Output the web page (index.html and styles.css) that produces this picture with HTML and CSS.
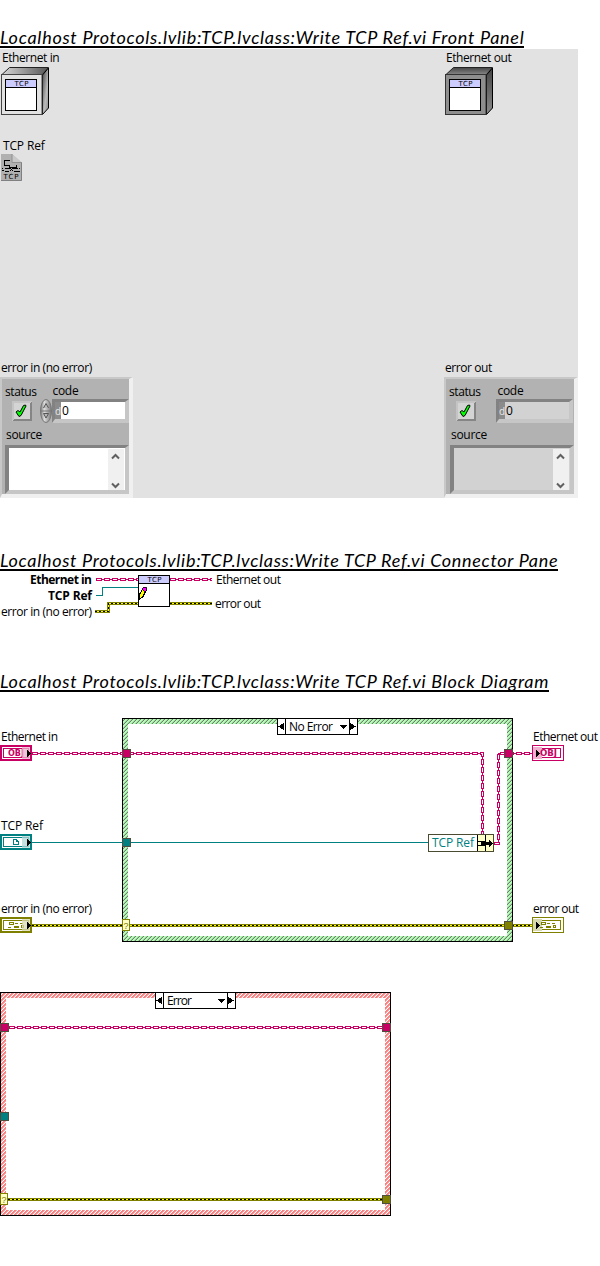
FILE: index.html
```html
<!DOCTYPE html>
<html lang="en">
<head>
<meta charset="utf-8">
<title>Write TCP Ref.vi</title>
<link rel="stylesheet" href="styles.css">
</head>
<body>
<svg class="defs" width="0" height="0" aria-hidden="true">
  <defs>
    <pattern id="hatch-green" width="4" height="4" patternUnits="userSpaceOnUse">
      <rect width="4" height="4" fill="#b3ffb3"/>
      <path d="M3 0h1v1h-1zM2 1h1v1h-1zM1 2h1v1h-1zM0 3h1v1h-1z" fill="#6f7f6f"/>
      <path d="M2 0h1v1h-1zM1 1h1v1h-1zM0 2h1v1h-1zM3 3h1v1h-1z" fill="#a6d2a6"/>
    </pattern>
    <pattern id="hatch-red" width="4" height="4" patternUnits="userSpaceOnUse">
      <rect width="4" height="4" fill="#ff8080"/>
      <path d="M3 0h1v1h-1zM2 1h1v1h-1zM1 2h1v1h-1zM0 3h1v1h-1z" fill="#fff"/>
      <path d="M2 0h1v1h-1zM1 1h1v1h-1zM0 2h1v1h-1zM3 3h1v1h-1z" fill="#eab0b0"/>
    </pattern>
    <linearGradient id="cube-top"><stop offset="0" stop-color="#d8d8d8"/><stop offset="1" stop-color="#555"/></linearGradient>
    <linearGradient id="cube-side" x2="1" y2="1"><stop offset="0" stop-color="#444"/><stop offset=".6" stop-color="#bbb"/><stop offset="1" stop-color="#888"/></linearGradient>
    <linearGradient id="cube-dark" x2="0" y2="1"><stop offset="0" stop-color="#444"/><stop offset="1" stop-color="#8c8c8c"/></linearGradient>
    <linearGradient id="knob"><stop offset="0" stop-color="#777"/><stop offset=".35" stop-color="#ddd"/><stop offset="1" stop-color="#777"/></linearGradient>
    <g id="vi-icon">
      <rect x=".5" y=".5" width="31" height="31" fill="#fff" stroke="#000"/>
      <rect x="1" y="1" width="30" height="7" fill="#ccccff"/>
      <path d="M1 8.500h30" stroke="#000"/>
      <text class="pixel" x="9.500" y="7" textLength="14">TCP</text>
    </g>
    <g id="check" shape-rendering="crispEdges">
      <rect width="20" height="20" fill="#c8c8c8"/>
      <path d="M0 20V0h20l-2 2H2v16z" fill="#c4c4c4"/>
      <path d="M20 0v20H0l2-2h16V2z" fill="#858585"/>
      <rect x="2" y="2" width="16" height="16" fill="#d4d4d4"/>
      <path shape-rendering="auto" d="M4 11l2-1.500 2 1.500 3.500-6.500 2-.5.500 1-5 9.500-2 1z" fill="#0f0" stroke="#000"/>
    </g>
    <g id="scroll">
      <rect width="16" height="41" fill="#f0f0f0"/>
      <path d="M4 9.500L7.500 6 11 9.500M4 34.500L7.500 38l3.500-3.500" fill="none" stroke="#606060" stroke-width="2"/>
    </g>
  </defs>
</svg>

<main>
<section class="front">
  <h2 class="title t1">Localhost Protocols.lvlib:TCP.lvclass:Write TCP Ref.vi Front Panel</h2>
  <div class="panel">
    <div class="column">
      <div class="label eth">Ethernet in</div>
      <svg class="cube" width="48" height="48" viewBox="0 0 48 48">
        <path d="M.5 8L8.500.5h39L41 8z" fill="url(#cube-top)" stroke="#222"/>
        <path d="M41.500 8l6-7v40l-6 6.500z" fill="url(#cube-side)" stroke="#000"/>
        <rect x=".5" y="7.500" width="40.500" height="40" fill="#e2e2e2" stroke="#444"/>
        <use href="#vi-icon" x="4" y="12"/>
      </svg>
      <div class="label ref">TCP Ref</div>
      <svg class="file" width="21" height="27" viewBox="0 0 21 27">
        <path d="M0 0h11l10 9v18H0z" fill="#b0b0b0"/>
        <path d="M11 0v8.500h10" fill="#c8c8c8" stroke="#909090"/>
        <path d="M20.500 9v17.500H0" fill="none" stroke="#808080"/>
        <g stroke="#000" fill="none" shape-rendering="crispEdges">
          <path d="M9 6.500H3.500v5H8M8 11.500l1 2h6v-3M4 14.500h5M12 14.500h5M4 17.500h4M13 17.500h5M1 16.500h2M1 14.500h1M9 14l3 3M12 14l-3 3M18 14.500h1M18 17.500h1"/>
        </g>
        <text class="pixel" x="2.500" y="24.500" textLength="15">TCP</text>
      </svg>
      <div class="label err">error in (no error)</div>
      <div class="cluster">
        <div class="top-row">
          <div class="status"><div class="label">status</div><svg width="20" height="20"><use href="#check"/></svg></div>
          <div class="code"><div class="label">code</div>
            <div class="code-row">
              <svg width="12" height="24" viewBox="0 0 12 24"><ellipse cx="6" cy="12" rx="5.500" ry="11.500" fill="url(#knob)" stroke="#777"/><path d="M1 12h10" stroke="#777"/><path d="M3.500 9L6 4.500 8.500 9M3.500 14.500h5L6 19z" fill="#bbb" stroke="#555"/></svg>
              <div class="number"><span class="radix">d</span><span class="value">0</span></div>
            </div>
          </div>
        </div>
        <div class="label source">source</div>
        <div class="textbox"><svg width="16" height="41"><use href="#scroll"/></svg></div>
      </div>
    </div>
    <div class="column">
      <div class="label eth">Ethernet out</div>
      <svg class="cube" width="48" height="48" viewBox="0 0 48 48">
        <path d="M.5 8L8.500.5h39L41 8z" fill="url(#cube-dark)" stroke="#222"/>
        <path d="M41.500 8l6-7v40l-6 6.500z" fill="url(#cube-dark)" stroke="#000"/>
        <rect x=".5" y="7.500" width="40.500" height="40" fill="#8e8e8e" stroke="#333"/>
        <use href="#vi-icon" x="4" y="12"/>
      </svg>
      <div class="label err">error out</div>
      <div class="cluster out">
        <div class="top-row">
          <div class="status"><div class="label">status</div><svg width="20" height="20"><use href="#check"/></svg></div>
          <div class="code"><div class="label">code</div>
            <div class="code-row"><div class="number"><span class="radix">d</span><span class="value">0</span></div></div>
          </div>
        </div>
        <div class="label source">source</div>
        <div class="textbox"><svg width="16" height="41"><use href="#scroll"/></svg></div>
      </div>
    </div>
  </div>
</section>

<section class="connector">
  <h2 class="title t2">Localhost Protocols.lvlib:TCP.lvclass:Write TCP Ref.vi Connector Pane</h2>
  <svg class="canvas" width="600" height="55" viewBox="0 571 600 55">
    <text class="bold" x="30" y="584" textLength="62">Ethernet in</text>
    <text class="bold" x="48" y="600" textLength="44">TCP Ref</text>
    <text x="1" y="616" textLength="91">error in (no error)</text>
    <text x="216" y="584" textLength="65">Ethernet out</text>
    <text x="215" y="608" textLength="46">error out</text>
    <g>
      <path class="obj-edge" d="M96 579.500H138M170 579.500H212"/><path class="obj-core" d="M96 579.500H138M170 579.500H212"/><path class="obj-dash" d="M97 579.500H138M171 579.500H212"/>
      <path class="ref-wire" d="M96 595.500h6.500v-8H138"/>
      <path class="err-edge" d="M95 611.500h13.500v-8H138M170 603.500h42"/><path class="err-core" d="M95 611.500h13.500v-8H138M170 603.500h42"/><path class="err-dash" d="M95 611.500h13.500v-8H138M170 603.500h42"/>
    </g>
    <use href="#vi-icon" x="138" y="575"/>
    <path d="M138.500 600.500l1.500-7 3-5 3 2-3 6z" fill="#ff0" stroke="#000"/>
    <path d="M142 589l1.500-2h2l1 1v2l-1.500 1.500z" fill="#f0f" stroke="#000" stroke-width=".8"/>
    <path d="M138 597v4l3-2z"/>
  </svg>
</section>

<section class="diagram">
  <h2 class="title t3">Localhost Protocols.lvlib:TCP.lvclass:Write TCP Ref.vi Block Diagram</h2>
  <svg class="canvas" width="600" height="574" viewBox="0 692 600 574">
    <text x="1" y="741" textLength="57">Ethernet in</text>
    <text x="1" y="830" textLength="42">TCP Ref</text>
    <text x="1" y="913" textLength="91">error in (no error)</text>
    <text x="533" y="741" textLength="65">Ethernet out</text>
    <text x="533" y="913" textLength="46">error out</text>

    <!-- case structure: no error -->
    <rect x="122" y="718" width="391" height="224"/>
    <rect x="123" y="719" width="389" height="222" fill="url(#hatch-green)"/>
    <rect x="128" y="724" width="379" height="212" fill="#fff"/>
    <!-- case structure: error -->
    <rect x="0" y="992" width="391" height="224"/>
    <rect x="1" y="993" width="389" height="222" fill="url(#hatch-red)"/>
    <rect x="6" y="998" width="379" height="212" fill="#fff"/>

    <!-- wires -->
    <path class="obj-edge" d="M32 753.500H482.500V834M494 843.500h4.500V753.500H532M9 1027.500H382"/>
    <path class="obj-core" d="M32 753.500H482.500V834M494 843.500h4.500V753.500H532M9 1027.500H382"/>
    <path class="obj-dash" d="M33 753.500H482.500V834M495 843.500h3.500V753.500H532M10 1027.500H382"/>
    <path class="ref-wire" d="M32 842.500H428"/>
    <path class="err-edge" d="M32 925.500H532M8 1199.500H382"/>
    <path class="err-core" d="M32 925.500H532M8 1199.500H382"/>
    <path class="err-dash" d="M32 925.500H532M8 1199.500H382"/>

    <!-- tunnels -->
    <g stroke="#4f4f40">
      <g fill="#c80064"><rect x="122.500" y="749.500" width="8" height="8"/><rect x="504.500" y="749.500" width="8" height="8"/><rect x=".5" y="1023.500" width="8" height="8"/><rect x="382.500" y="1023.500" width="8" height="8"/></g>
      <g fill="#008080"><rect x="122.500" y="838.500" width="8" height="8"/><rect x=".5" y="1112.500" width="8" height="8"/></g>
      <g fill="#808000"><rect x="504.500" y="921.500" width="8" height="8"/><rect x="382.500" y="1195.500" width="8" height="8"/></g>
    </g>
    <g fill="#ffffc8" stroke="#808000"><rect x="122.500" y="919.500" width="7" height="11"/><rect x=".5" y="1193.500" width="7" height="11"/></g>
    <text class="query" x="123.500" y="929">?</text><text class="query" x="1.500" y="1203">?</text>

    <!-- case selectors -->
    <g id="selector">
      <rect x="277.500" y="718.500" width="80" height="16" fill="#fff" stroke="#000"/>
      <path d="M285.500 718v17M349.500 718v17" stroke="#000"/>
      <path d="M284 723v7l-6-3.500zM350 723v7l6-3.500zM340 725h7l-3.500 4z"/>
    </g>
    <use href="#selector" x="-122" y="274"/>
    <text x="289" y="731" textLength="44">No Error</text>
    <text x="167" y="1005" textLength="25">Error</text>

    <!-- bundle by name -->
    <rect x="428.500" y="834.500" width="65" height="17" fill="#ffffc8" stroke="#4b4b32"/>
    <rect x="429" y="835" width="48" height="16" fill="#fff"/>
    <path d="M477.500 835v16M485.500 835v16" stroke="#000"/>
    <path d="M478 841h7v5h-7l1-2.500zM485 842h4v-2l4 3.500-4 3.500v-2h-4z"/><path d="M479 842h2v3h-2z" fill="#ffffc8"/>
    <text class="teal" x="432" y="847" textLength="42">TCP Ref</text>

    <!-- input terminals -->
    <g fill="none">
      <g stroke="#c80064"><rect x="1" y="746" width="30" height="14" fill="#fff" stroke-width="2"/><rect x="3.500" y="748.500" width="25" height="9"/></g>
      <g stroke="#008080"><rect x="1" y="835" width="30" height="14" fill="#fff" stroke-width="2"/><rect x="3.500" y="837.500" width="25" height="9"/><path d="M13.500 839.500h3l2 2v3h-5zM16.500 839.500v2h2"/></g>
      <g stroke="#808000"><rect x="1" y="918" width="30" height="14" fill="#fff" stroke-width="2"/><rect x="3.500" y="920.500" width="25" height="9"/></g>
    </g>
    <text class="obj" x="8" y="756" textLength="16" lengthAdjust="spacingAndGlyphs">OBJ</text>
    <g id="cluster-glyph" fill="none" stroke="#808000"><path d="M9.500 922.500h4v2h-4zM15 923.500h3M20 923h3M8 927.500h3M14 926.500h4v1h-4zM21.500 925.500h2v2h-2z"/></g>
    <rect x="22" y="747" width="8" height="12" fill="#eeb0cd" opacity=".75"/>
    <rect x="22" y="836" width="8" height="12" fill="#b0d5d5" opacity=".75"/>
    <rect x="22" y="919" width="8" height="12" fill="#d8d8b0" opacity=".75"/>
    <path d="M27 750l3.500 3.500-3.500 3.500zM27 839l3.500 3.500-3.500 3.500zM27 922l3.500 3.500-3.500 3.500z"/>

    <!-- output terminals -->
    <g stroke="#c80064" fill="#fff"><rect x="532.500" y="745.500" width="31" height="15"/><rect x="535.500" y="748.500" width="25" height="9"/></g>
    <g stroke="#808000" fill="#fff"><rect x="532.500" y="917.500" width="31" height="15"/><rect x="535.500" y="920.500" width="25" height="9"/></g>
    <rect x="533" y="747" width="9" height="12" fill="#eeb0cd"/><rect x="533" y="919" width="9" height="12" fill="#d8d8b0"/>
    <text class="obj" x="540" y="756" textLength="17" lengthAdjust="spacingAndGlyphs">OBJ</text>
    <use href="#cluster-glyph" x="532"/>
    <path d="M536 750l3.500 3.500-3.500 3.500zM536 922l3.500 3.500-3.500 3.500z"/>
  </svg>
</section>
</main>
</body>
</html>
```
FILE: styles.css
```css
body {
  margin: 0;
  background: #fff;
  color: #000;
  font: 12px/16px "Open Sans", "Noto Sans", sans-serif;
}
.defs { position: absolute; }
svg { display: block; flex: none; }
main { width: 600px; padding-top: 26px; box-sizing: border-box; }

.title {
  margin: 0;
  height: 20px;
  overflow: hidden;
  border-bottom: 2px solid #000;
  font: italic 400 18px/22px Lato, sans-serif;
  white-space: nowrap;
}
.t1 { width: 524px; letter-spacing: .72px; }
.t2 { width: 558px; letter-spacing: .69px; }
.t3 { width: 549px; letter-spacing: .71px; }
.connector { margin-top: 51px; }
.diagram { margin-top: 44px; }

.panel {
  display: flex;
  width: 578px;
  height: 449px;
  margin-top: 1px;
  background: #e2e2e2;
}
.column { display: flex; flex-direction: column; width: 444px; height: 449px; }
.column + .column { width: 134px; }
.label { height: 16px; letter-spacing: -.42px; white-space: nowrap; }
.eth { padding: 1px 0 0 2px; }
.cube { margin: 1px 0 0 1px; }
.ref { margin-top: 23px; padding-left: 3px; letter-spacing: -.15px; }
.file { margin: 0 0 0 1px; }
.err { margin-top: auto; padding-left: 1px; }
.cluster {
  box-sizing: border-box;
  width: 133px;
  height: 121px;
  margin-top: 1px;
  padding: 4px 0 0 3px;
  background: #b2b2b2;
  border-style: solid;
  border-width: 2px 4px 4px 2px;
  border-color: #c8c8c8 #f0f0f0 #f0f0f0 #c8c8c8;
}
.cluster.out { width: 134px; }
.top-row { display: flex; height: 44px; }
.status { width: 35px; padding-top: 1px; }
.status svg { margin: 1px 0 0 7px; }
.code .label { padding-left: 12.5px; letter-spacing: -.3px; }
.out .code .label { padding-left: 13.5px; }
.code-row { display: flex; }
.number {
  box-sizing: border-box;
  display: flex;
  width: 77px;
  height: 24px;
  background: #fff;
  border: solid;
  border-width: 3px 4px 4px 3px;
  border-color: #828282 #c6c6c6 #c6c6c6 #828282;
}
.out .number { margin-left: 12px; background: #d2d2d2; }
.radix { width: 6px; background: #8b8b8b; color: #e8e8e8; font-size: 10px; line-height: 18px; }
.value { padding-left: 1px; line-height: 17px; }
.source { padding-left: 1px; letter-spacing: -.3px; }
.out .source { padding-left: 2px; }
.textbox {
  box-sizing: border-box;
  display: flex;
  justify-content: flex-end;
  width: 124px;
  height: 49px;
  margin-top: 2px;
  padding: 1px 1px 0 0;
  background: #fff;
  border: solid;
  border-width: 3px 4px 4px 4px;
  border-color: #828282 #c6c6c6 #c6c6c6 #828282;
}
.out .textbox { margin-left: 1px; background: #d2d2d2; }

.canvas { shape-rendering: crispEdges; }
.canvas text { font: 12px "Open Sans", "Noto Sans", sans-serif; fill: #000; }
.canvas .bold { font-weight: 700; }
.canvas .teal { fill: #008080; }
.pixel, .canvas .pixel { font: 400 7px "DejaVu Sans", sans-serif; fill: #000; }
.canvas .obj { font: 700 8px "DejaVu Sans", sans-serif; fill: #c80064; }
.canvas .query { font: 9px "Liberation Sans", sans-serif; fill: #808000; }
.obj-edge, .obj-core, .obj-dash, .ref-wire, .err-edge, .err-core, .err-dash { fill: none; }
.obj-edge { stroke: #c80064; stroke-width: 3; stroke-dasharray: 6 2; }
.obj-core { stroke: #c80064; stroke-width: 1; }
.obj-dash { stroke: #fff; stroke-width: 1; stroke-dasharray: 4 4; }
.ref-wire { stroke: #008080; }
.err-edge { stroke: #808000; stroke-width: 3; }
.err-core { stroke: #ffff00; stroke-width: 1; }
.err-dash { stroke: #000; stroke-width: 1; stroke-dasharray: 2 2; }
```
